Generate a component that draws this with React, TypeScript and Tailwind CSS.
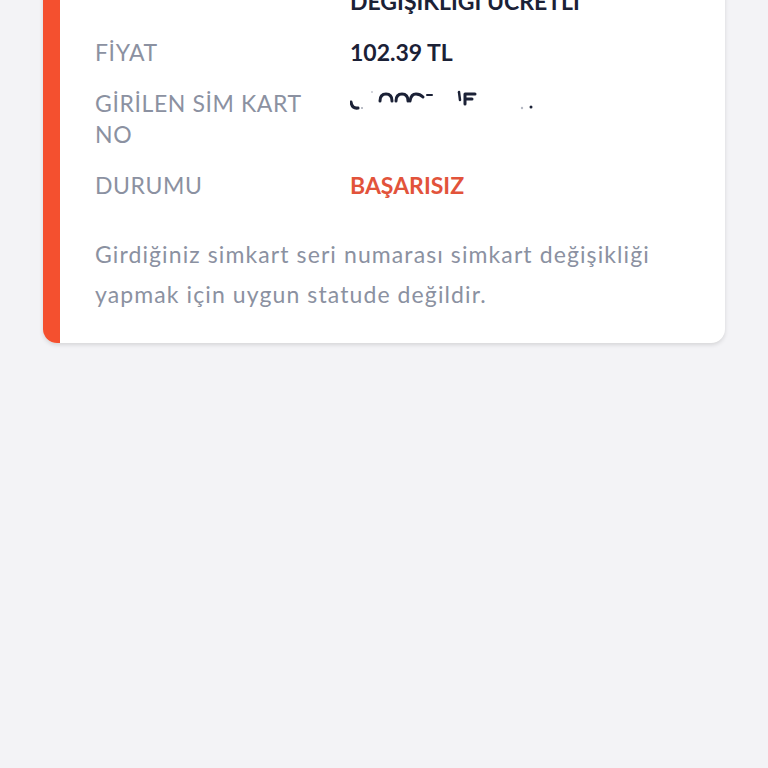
export default function App() {
    const rows = [
        { label: 'FİYAT', value: '102.39 TL', tone: 'text-[#1b2136]' },
    ];

    return (
        <div className="flow-root h-screen overflow-hidden bg-[#f3f3f6] px-[43px] font-['Lato',sans-serif]">
            <div className="-mt-[73px] flex overflow-hidden rounded-[14px] bg-white shadow-[0_2px_4px_rgba(0,0,0,0.12)]">
                <div className="w-[17px] shrink-0 bg-[#f4502f]" />
                <div className="flex-1 pt-[28px] pr-[20px] pb-[29px] pl-[35px]">
                    <div className="grid grid-cols-[255px_1fr] gap-y-[20px] text-[23px] leading-[31px]">
                        <p className="tracking-[0.6px] text-[#8b91a1]">İŞLEM TİPİ</p>
                        <p className="font-bold text-[#1b2136]">
                            SİM KART
                            <br />
                            DEĞİŞİKLİĞİ ÜCRETLİ
                        </p>

                        {rows.map(({ label, value, tone }) => (
                            <div key={label} className="contents">
                                <p className="tracking-[0.6px] text-[#8b91a1]">{label}</p>
                                <p className={`font-bold ${tone}`}>{value}</p>
                            </div>
                        ))}

                        <p className="pr-6 tracking-[0.6px] text-[#8b91a1]">GİRİLEN SİM KART NO</p>
                        {/* seri no kapatılmış, sadece kırıntılar görünüyor */}
                        <svg width="200" height="31" viewBox="0 0 200 31" fill="none" stroke="#1b2136" strokeWidth="3" strokeLinecap="round">
                            <path d="M1 14 Q2 21 8 20" />
                            <path d="M30 13 Q30 6 36 6 Q42 6 42 13" />
                            <path d="M46 13 Q46 6 52 6 Q58 6 58 13" />
                            <path d="M73 9 Q70 6 66 6 Q61 6 60 13" />
                            <path d="M77 7 L82 7" strokeWidth="2" />
                            <path d="M109 4 L110 12" strokeWidth="2.5" />
                            <path d="M115 6 L125 6 M115 6 L115 16 M115 11 L122 11" />
                            <circle cx="12" cy="20" r="1" fill="#a4a9b4" stroke="none" />
                            <circle cx="22" cy="4" r="1" fill="#c3c6ce" stroke="none" />
                            <circle cx="172" cy="20" r="1.2" fill="#b5b9c3" stroke="none" />
                            <circle cx="181" cy="19" r="1.5" fill="#1b2136" stroke="none" />
                        </svg>

                        <p className="tracking-[0.6px] text-[#8b91a1]">DURUMU</p>
                        <p className="font-bold text-[#e2533b]">BAŞARISIZ</p>
                    </div>

                    <p className="mt-[33px] max-w-[590px] text-[23px] leading-[40px] tracking-[1.1px] text-[#8b91a1]">
                        Girdiğiniz simkart seri numarası simkart değişikliği yapmak için uygun statude değildir.
                    </p>
                </div>
            </div>
        </div>
    );
}
